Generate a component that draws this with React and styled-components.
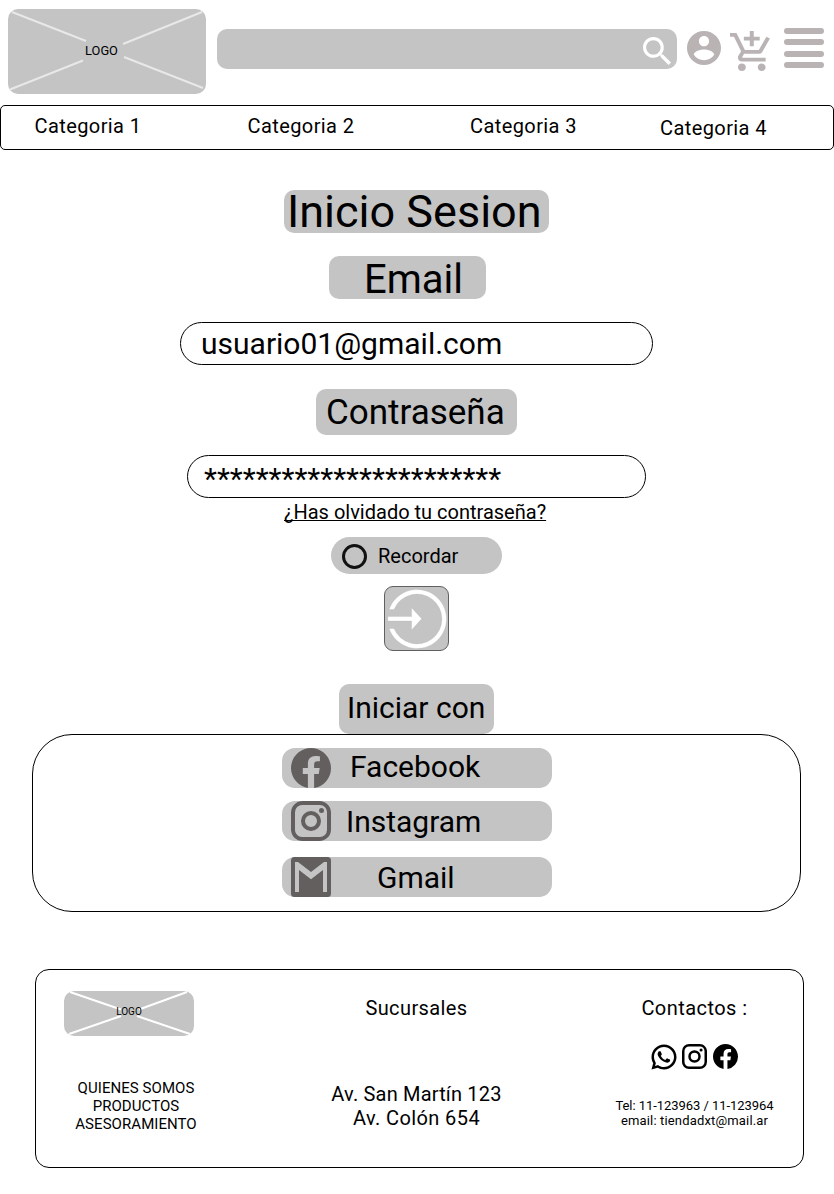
import React from "react";
import styled, { createGlobalStyle } from "styled-components";
import { RiWhatsappLine } from "react-icons/ri";

const GlobalStyle = createGlobalStyle`
  * { box-sizing: border-box; }
  body { margin: 0; background: #fff; color: #000; font-family: Roboto, "Liberation Sans", sans-serif; }
`;

const Page = styled.div`
  width: 834px;
  height: 1194px;
  overflow: hidden;
  display: flex;
  flex-direction: column;
`;

const Header = styled.header`
  display: flex;
  align-items: flex-start;
  height: 105px;
  padding: 9px 0 0 8px;
`;

const LogoBox = styled.div`
  position: relative;
  display: flex;
  justify-content: center;
  flex: none;
  width: ${(p) => p.$w}px;
  height: ${(p) => p.$h}px;
  margin-left: ${(p) => p.$left || 0}px;
  padding-right: ${(p) => p.$shift || 0}px;
  border-radius: ${(p) => p.$r}px;
  background: #c4c4c4;
  font-size: ${(p) => p.$size}px;
  line-height: ${(p) => p.$line}px;
  svg { position: absolute; inset: 0; }
  span { position: relative; }
`;

const SearchBar = styled.div`
  display: flex;
  justify-content: flex-end;
  width: 460px;
  height: 40px;
  margin: 20px 0 0 11px;
  padding: 8px 6.5px 0 0;
  border-radius: 10px;
  background: #c4c4c4;
`;

const HeaderIcon = styled.svg`
  flex: none;
  margin: ${(p) => p.$m};
  fill: #bab3b3;
`;

const MenuButton = styled.div`
  display: flex;
  flex-direction: column;
  justify-content: space-between;
  width: 40px;
  height: 40px;
  margin: 19px 0 0 14px;
`;

const MenuBar = styled.span`
  height: 6px;
  border-radius: 3px;
  background: #bab3b3;
`;

const Categories = styled.nav`
  display: flex;
  height: 45px;
  padding-left: 33.6px;
  border: 1px solid #000;
  border-radius: 5px;
  font-size: 20px;
  line-height: 40px;
`;

const Category = styled.span`
  width: ${(p) => p.$w}px;
  padding-top: ${(p) => p.$top || 0}px;
  letter-spacing: 0.4px;
  white-space: nowrap;
`;

const Main = styled.main`
  display: flex;
  flex-direction: column;
  height: 819px;
`;

const Tag = styled.div`
  flex: none;
  width: ${(p) => p.$w}px;
  height: ${(p) => p.$h}px;
  margin: ${(p) => p.$m};
  padding-left: ${(p) => p.$pad}px;
  border-radius: 10px;
  background: #c4c4c4;
  font-size: ${(p) => p.$size}px;
  line-height: ${(p) => p.$line}px;
  white-space: nowrap;
`;

const Field = styled.div`
  flex: none;
  width: ${(p) => p.$w}px;
  height: 43px;
  margin: ${(p) => p.$m};
  padding-left: ${(p) => p.$pad}px;
  border: 1px solid #000;
  border-radius: 22px;
  font-size: 30px;
  line-height: ${(p) => p.$line}px;
  white-space: nowrap;
`;

const ForgotLink = styled.a`
  margin-left: 284px;
  height: 39px;
  font-size: 20px;
  line-height: 28px;
  white-space: nowrap;
  text-decoration: underline;
  text-decoration-thickness: 1px;
  text-decoration-skip-ink: none;
`;

const Remember = styled.label`
  display: flex;
  align-items: flex-start;
  width: 171px;
  height: 37px;
  margin-left: 331px;
  padding-left: 11px;
  border-radius: 19px;
  background: #c4c4c4;
  font-size: 20px;
  line-height: 38px;
`;

const Radio = styled.span`
  width: 25px;
  height: 25px;
  margin: 7px 11px 0 0;
  border: 3px solid #111;
  border-radius: 50%;
`;

const LoginButton = styled.div`
  flex: none;
  width: 65px;
  height: 65px;
  margin: 12px 0 33px 384px;
  border: 1px solid #606060;
  border-radius: 9px;
  background: #c4c4c4;
  svg { display: block; }
`;

const Providers = styled.section`
  flex: none;
  width: 769px;
  height: 178px;
  margin-left: 32px;
  padding: 13px 0 0 249px;
  border: 1px solid #000;
  border-radius: 40px;
`;

const Provider = styled.div`
  display: flex;
  width: 270px;
  height: 40px;
  margin-bottom: ${(p) => p.$gap}px;
  padding-left: 9px;
  border-radius: 13px;
  background: #c4c4c4;
  font-size: 30px;
  line-height: ${(p) => p.$line}px;
  svg { flex: none; fill: #635f5f; margin-right: ${(p) => p.$space}px; }
`;

const Footer = styled.footer`
  display: flex;
  width: 769px;
  height: 199px;
  margin-left: 35px;
  padding-left: 25px;
  border: 1px solid #000;
  border-radius: 14px;
`;

const Column = styled.div`
  width: ${(p) => p.$w}px;
  margin-right: ${(p) => p.$gap || 0}px;
  padding-top: ${(p) => p.$top}px;
  text-align: center;
`;

const ColumnTitle = styled.div`
  font-size: 20px;
  line-height: 24px;
  letter-spacing: ${(p) => p.$ls}px;
`;

const Lines = styled.div`
  margin-top: ${(p) => p.$top}px;
  font-size: ${(p) => p.$size}px;
  line-height: ${(p) => p.$line}px;
  letter-spacing: ${(p) => p.$ls}px;
  white-space: nowrap;
`;

const Line = styled.div`
  letter-spacing: ${(p) => p.$ls}px;
`;

const Socials = styled.div`
  display: flex;
  justify-content: center;
  gap: 6px;
  height: 25px;
  margin-top: 24px;
`;

const WhatsAppFrame = styled.span`
  display: flex;
  align-items: center;
  justify-content: center;
  width: 25px;
  height: 25px;
  svg { flex: none; }
`;

const FACEBOOK =
  "M12 2.04C6.5 2.04 2 6.53 2 12.06C2 17.06 5.66 21.21 10.44 21.96V14.96H7.9V12.06H10.44V9.85C10.44 7.34 11.93 5.96 14.22 5.96C15.31 5.96 16.45 6.15 16.45 6.15V8.62H15.19C13.95 8.62 13.56 9.39 13.56 10.18V12.06H16.34L15.89 14.96H13.56V21.96A10 10 0 0 0 22 12.06C22 6.53 17.5 2.04 12 2.04Z";
const INSTAGRAM =
  "M7.8,2H16.2C19.4,2 22,4.6 22,7.8V16.2A5.8,5.8 0 0,1 16.2,22H7.8C4.6,22 2,19.4 2,16.2V7.8A5.8,5.8 0 0,1 7.8,2M7.6,4A3.6,3.6 0 0,0 4,7.6V16.4C4,18.39 5.61,20 7.6,20H16.4A3.6,3.6 0 0,0 20,16.4V7.6C20,5.61 18.39,4 16.4,4H7.6M17.25,5.5A1.25,1.25 0 0,1 18.5,6.75A1.25,1.25 0 0,1 17.25,8A1.25,1.25 0 0,1 16,6.75A1.25,1.25 0 0,1 17.25,5.5M12,7A5,5 0 0,1 17,12A5,5 0 0,1 12,17A5,5 0 0,1 7,12A5,5 0 0,1 12,7M12,9A3,3 0 0,0 9,12A3,3 0 0,0 12,15A3,3 0 0,0 15,12A3,3 0 0,0 12,9Z";

const BrandIcon = ({ d, size }) => (
  <svg width={size} height={size} viewBox="2 2 20 20">
    <path d={d} />
  </svg>
);

export default function App() {
  return (
    <Page>
      <GlobalStyle />
      <Header>
        <LogoBox $w={198} $h={85} $r={10} $size={12.8} $line={84} $shift={11}>
          <svg width="198" height="85" stroke="#e8e8e8" strokeWidth="2">
            <path d="M4 3L78 32M115 35L194 3M2 80.500L75 51.500M116 48L195 79" />
          </svg>
          <span>LOGO</span>
        </LogoBox>
        <SearchBar>
          <svg width="28" height="28" viewBox="3 3 17.5 17.5" fill="#fff">
            <path d="M15.5 14h-.79l-.28-.27C15.41 12.59 16 11.11 16 9.5 16 5.91 13.09 3 9.5 3S3 5.91 3 9.500 5.910 16 9.500 16c1.610 0 3.090-.59 4.230-1.570l.27.28v.79l5 4.990L20.490 19l-4.990-5zm-6 0C7.010 14 5 11.990 5 9.500S7.010 5 9.500 5 14 7.010 14 9.500 11.990 14 9.500 14z" />
          </svg>
        </SearchBar>
        <HeaderIcon width="34" height="34" viewBox="2 2 20 20" $m="22px 0 0 10px">
          <path d="M12 2C6.480 2 2 6.480 2 12s4.480 10 10 10 10-4.480 10-10S17.520 2 12 2zm0 3c1.660 0 3 1.340 3 3s-1.340 3-3 3-3-1.340-3-3 1.340-3 3-3zm0 14.200c-2.500 0-4.710-1.280-6-3.220.03-1.990 4-3.080 6-3.080 1.990 0 5.970 1.090 6 3.080-1.290 1.940-3.500 3.220-6 3.220z" />
        </HeaderIcon>
        <HeaderIcon width="40" height="40" viewBox="1 1 20.2 21" preserveAspectRatio="none" $m="22px 0 0 9px">
          <path d="M11 9h2V6h3V4h-3V1h-2v3H8v2h3v3zm-4 9c-1.100 0-1.990.9-1.990 2S5.900 22 7 22s2-.9 2-2-.9-2-2-2zm10 0c-1.100 0-1.990.9-1.990 2s.89 2 1.990 2 2-.9 2-2-.9-2-2-2zm-9.830-3.250l.03-.12.9-1.630h7.450c.75 0 1.410-.41 1.750-1.030l3.860-7.010L19.420 4h-.01l-1.100 2-2.760 5H8.530l-.13-.27L6.160 6l-.95-2-.94-2H1v2h2l3.600 7.590-1.350 2.450c-.16.28-.25.61-.25.96 0 1.100.9 2 2 2h12v-2H7.420c-.13 0-.25-.11-.25-.25z" />
        </HeaderIcon>
        <MenuButton>
          <MenuBar />
          <MenuBar />
          <MenuBar />
          <MenuBar />
        </MenuButton>
      </Header>

      <Categories>
        <Category $w={213}>Categoria 1</Category>
        <Category $w={222.500}>Categoria 2</Category>
        <Category $w={190}>Categoria 3</Category>
        <Category $w={120} $top={2}>Categoria 4</Category>
      </Categories>

      <Main>
        <Tag $w={265} $h={43} $m="40px 0 0 284px" $pad={3} $size={45} $line={43}>Inicio Sesion</Tag>
        <Tag $w={157} $h={43} $m="23px 0 0 329px" $pad={35} $size={40} $line={47}>Email</Tag>
        <Field $w={473} $m="23px 0 0 180px" $pad={20} $line={41}>usuario01@gmail.com</Field>
        <Tag $w={201} $h={46} $m="24px 0 0 316px" $pad={10} $size={35} $line={47}>Contraseña</Tag>
        <Field $w={459} $m="20px 0 0 187px" $pad={16} $line={46}>***********************</Field>
        <ForgotLink>¿Has olvidado tu contraseña?</ForgotLink>
        <Remember>
          <Radio />
          Recordar
        </Remember>
        <LoginButton>
          <svg width="63" height="63" viewBox="385 587 63 63" fill="#fff" stroke="#b4b4b4" strokeWidth="0.3">
            <path d="M389.100 609.500A29.500 29.500 0 1 1 389.100 628.500H394A24.900 24.900 0 1 0 394 609.500Z" />
            <path d="M387.800 616.600H411.600V607.700L421.700 618.800L411.600 629.900V621.100H387.800Z" />
          </svg>
        </LoginButton>
        <Tag $w={155} $h={50} $m="0 0 0 339px" $pad={8} $size={30} $line={47}>Iniciar con</Tag>
        <Providers>
          <Provider $gap={13} $line={37} $space={19}>
            <BrandIcon d={FACEBOOK} size={40} />
            Facebook
          </Provider>
          <Provider $gap={16} $line={41} $space={15}>
            <BrandIcon d={INSTAGRAM} size={40} />
            Instagram
          </Provider>
          <Provider $gap={0} $line={41} $space={46}>
            <svg width="40" height="40" viewBox="0 0 40 40">
              <path
                fillRule="evenodd"
                d="M3.500 0H36.500A3.500 3.500 0 0 1 40 3.500V36.500A3.500 3.500 0 0 1 36.500 40H3.500A3.500 3.500 0 0 1 0 36.500V3.500A3.500 3.500 0 0 1 3.500 0ZM4 35V5H7L20 15L33 5H36V35H32V13L20 22.300L8 13V35Z"
              />
            </svg>
            Gmail
          </Provider>
        </Providers>
      </Main>

      <Footer>
        <Column $w={150} $gap={105.500} $top={21}>
          <LogoBox $w={130} $h={45} $left={3} $r={10} $size={10} $line={41}>
            <svg width="130" height="45" stroke="#fff" strokeWidth="2">
              <path d="M6 1L57 18.500M75 18.500L123 1M5 43L57 25M73 25L126 43" />
            </svg>
            <span>LOGO</span>
          </LogoBox>
          <Lines $top={43} $size={15} $line={18} $ls={0.06}>
            QUIENES SOMOS<br />PRODUCTOS<br />ASESORAMIENTO
          </Lines>
        </Column>
        <Column $w={200} $gap={77.500} $top={26}>
          <ColumnTitle $ls={0.4}>Sucursales</ColumnTitle>
          <Lines $top={62} $size={20} $line={24}>
            <Line $ls={0.180}>Av. San Martín 123</Line>
            <Line $ls={0.400}>Av. Colón 654</Line>
          </Lines>
        </Column>
        <Column $w={201} $top={26}>
          <ColumnTitle $ls={0.450}>Contactos :</ColumnTitle>
          <Socials>
            <WhatsAppFrame>
              <RiWhatsappLine size={30} />
            </WhatsAppFrame>
            <BrandIcon d={INSTAGRAM} size={25} />
            <BrandIcon d={FACEBOOK} size={25} />
          </Socials>
          <Lines $top={29} $size={13} $line={15}>
            <Line $ls={-0.050}>Tel: 11-123963 / 11-123964</Line>
            <Line $ls={0.160}>email: tiendadxt@mail.ar</Line>
          </Lines>
        </Column>
      </Footer>
    </Page>
  );
}
